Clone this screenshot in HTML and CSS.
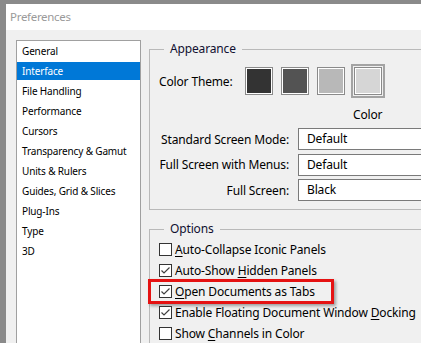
FILE: index.html
```html
<!DOCTYPE html>
<html>
<head>
<meta charset="utf-8">
<title>Preferences</title>
<link rel="stylesheet" href="styles.css">
</head>
<body>
<div class="window">
  <div class="titlebar">Preferences</div>
  <div class="client">
    <ul class="nav">
      <li>General</li>
      <li class="selected">Interface</li>
      <li>File Handling</li>
      <li>Performance</li>
      <li>Cursors</li>
      <li>Transparency &amp; Gamut</li>
      <li>Units &amp; Rulers</li>
      <li>Guides, Grid &amp; Slices</li>
      <li>Plug-Ins</li>
      <li>Type</li>
      <li>3D</li>
    </ul>
    <div class="panel">
      <fieldset class="group appearance">
        <legend>Appearance</legend>
        <div class="theme-row">
          <span class="theme-label">Color Theme:</span>
          <div class="swatches">
            <div class="swatch-col"><span class="swatch s1"></span></div>
            <div class="swatch-col"><span class="swatch s2"></span></div>
            <div class="swatch-col"><span class="swatch s3"></span></div>
            <div class="swatch-col"><span class="swatch s4 active"></span><span class="swatch-caption">Color</span></div>
          </div>
        </div>
        <div class="fields">
          <label class="field-label">Standard Screen Mode:</label>
          <div class="select">Default</div>
          <label class="field-label">Full Screen with Menus:</label>
          <div class="select">Default</div>
          <label class="field-label">Full Screen:</label>
          <div class="select">Black</div>
        </div>
      </fieldset>
      <fieldset class="group options">
        <legend>Options</legend>
        <div class="check"><span class="box"></span><span class="check-text"><u>A</u>uto-Collapse Iconic Panels</span></div>
        <div class="check"><span class="box checked"><svg viewBox="0 0 13 13" width="13" height="13"><polyline points="2.5,6.5 5,9 10.5,3.5" fill="none" stroke="#404040" stroke-width="1.2"/></svg></span><span class="check-text">Auto-Show <u>H</u>idden Panels</span></div>
        <div class="check marked"><span class="box checked"><svg viewBox="0 0 13 13" width="13" height="13"><polyline points="2.5,6.5 5,9 10.5,3.5" fill="none" stroke="#404040" stroke-width="1.2"/></svg></span><span class="check-text"><u>O</u>pen Documents as Tabs</span><span class="callout"></span></div>
        <div class="check"><span class="box checked"><svg viewBox="0 0 13 13" width="13" height="13"><polyline points="2.5,6.5 5,9 10.5,3.5" fill="none" stroke="#404040" stroke-width="1.2"/></svg></span><span class="check-text">Enable Floating Document Window <u>D</u>ocking</span></div>
        <div class="check"><span class="box"></span><span class="check-text">Show <u>C</u>hannels in Color</span></div>
      </fieldset>
    </div>
  </div>
</div>
</body>
</html>
```

FILE: styles.css
```css
html, body {
  margin: 0;
  padding: 0;
  height: 100%;
  overflow: hidden;
}
body {
  background: #8a8a8a;
  font-family: "Noto Sans", "Liberation Sans", sans-serif;
  font-size: 11px;
  color: #000;
}
.window {
  margin: 4px 0 0 6px;
  width: 460px;
  height: 400px;
  display: flex;
  flex-direction: column;
  background: #f0f0f0;
}
.titlebar {
  height: 26px;
  line-height: 26px;
  background: #fff;
  color: #9a9a9a;
  font-size: 11.5px;
  letter-spacing: -0.3px;
  padding-left: 4px;
}
.client {
  flex: 1;
  display: flex;
  padding: 10px 0 0 10px;
  background: #f0f0f0;
}
.nav {
  list-style: none;
  margin: 0;
  padding: 1px 0 0;
  width: 123px;
  height: 400px;
  flex: none;
  background: #fff;
  border: 1px solid #a0a0a0;
  font-size: 10px;
  letter-spacing: -0.15px;
}
.nav li {
  height: 18px;
  line-height: 18px;
  margin-bottom: 2px;
  padding-left: 5px;
  white-space: nowrap;
}
.nav li.selected {
  background: #0078d7;
  color: #fff;
}
.panel {
  margin-left: 8px;
  padding-top: 1px;
  width: 320px;
  flex: none;
  display: flex;
  flex-direction: column;
  font-size: 12px;
  letter-spacing: -0.15px;
}
.group {
  margin: 0;
  min-width: 0;
  border: 1px solid #b9b9b9;
  padding: 0 0 0 9px;
}
.group legend {
  margin-left: 5px;
  padding: 0 6px;
  line-height: 16px;
  font-size: 12px;
  color: #101030;
}
.theme-row {
  display: flex;
  align-items: flex-start;
  margin-top: 10px;
}
.theme-label {
  width: 86px;
  line-height: 30px;
  flex: none;
  white-space: nowrap;
}
.swatches {
  display: flex;
  gap: 8px;
}
.swatch-col {
  display: flex;
  flex-direction: column;
  align-items: center;
}
.swatch {
  display: block;
  width: 26px;
  height: 26px;
  border: 1px solid #8a8a8a;
  box-shadow: inset 0 0 0 1px #fff;
}
.s1 { background: #333333; }
.s2 { background: #535353; }
.s3 { background: #b8b8b8; }
.s4 { background: #d6d6d6; }
.swatch.active {
  outline: 2px solid #a3a3a3;
  outline-offset: 1px;
}
.swatch-caption {
  margin-top: 12px;
  line-height: 16px;
}
.fields {
  display: grid;
  grid-template-columns: 130px 1fr;
  column-gap: 9px;
  row-gap: 3.5px;
  margin-top: 5px;
  padding-bottom: 8px;
  align-items: center;
}
.field-label {
  text-align: right;
  white-space: nowrap;
}
.select {
  height: 20px;
  line-height: 20px;
  border: 1px solid #7a7a7a;
  background: #fff;
  padding-left: 8px;
}
.options {
  margin-top: 11px;
  padding-top: 1.5px;
  height: 200px;
}
.check {
  position: relative;
  display: flex;
  align-items: center;
  height: 21px;
  gap: 3px;
  white-space: nowrap;
}
.box {
  width: 11px;
  height: 11px;
  border: 1px solid #333;
  background: #fff;
  flex: none;
  position: relative;
}
.box svg {
  display: block;
  margin: -1px;
}
.check-text u {
  text-decoration-thickness: 1px;
  text-underline-offset: 2px;
}
.callout {
  position: absolute;
  left: -11px;
  top: -2px;
  width: 180px;
  height: 19px;
  border: 3px solid #e51212;
  box-shadow: 2px 2px 3px rgba(0, 0, 0, 0.35);
}
```
